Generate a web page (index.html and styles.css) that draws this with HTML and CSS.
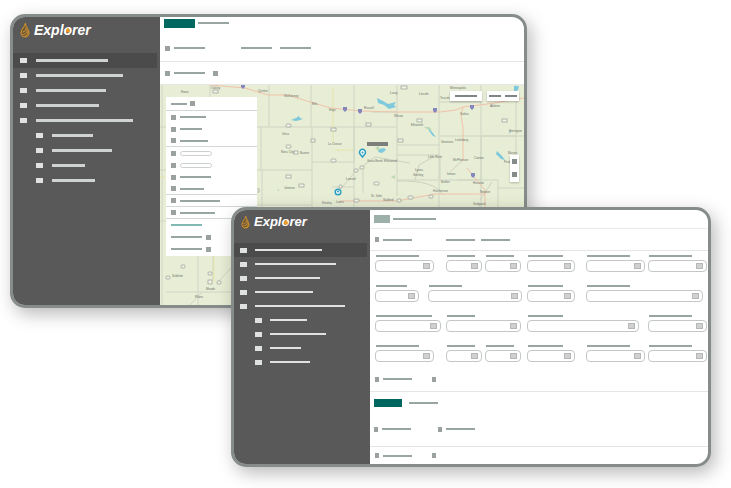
FILE: index.html
```html
<!DOCTYPE html>
<html lang="en">
<head>
<meta charset="utf-8">
<title>Explorer</title>
<link rel="stylesheet" href="styles.css">
</head>
<body>
<svg class="defs" aria-hidden="true">
  <symbol id="flame" viewBox="0 0 20 32">
    <path d="M10 1C11 8 19 13 19 22a9 9 0 0 1-18 0C1 14 9 9 10 1Z" fill="#6b5636"/>
    <path d="M11 2c-1 8-9 12-9 20 0 4 3 8 7 8M11 4c1 7 7 11 7 18 0 4-3 8-8 8M5 20c4 0 8-4 7-9M5 25c6 0 10-4 9-10M9 29c5-1 8-5 7-10" fill="none" stroke="#dc9a30" stroke-width="2"/>
  </symbol>
  <symbol id="drop" viewBox="0 0 10 14">
    <path d="M5 0C6 4 10 6 10 9.500a5 4.500 0 0 1-10 0C0 6 4 4 5 0Z" fill="#f29a24"/>
  </symbol>
</svg>
<main class="desktop">
  <section class="window window-map">
    <aside class="sidebar">
      <a class="brand" href="#"><svg class="flame"><use href="#flame"/></svg><span class="name">Explorer<svg class="drop"><use href="#drop"/></svg></span></a>
      <nav class="menu">
        <a class="active" href="#" aria-label="Item 1"><i class="tile"></i><i class="line w-72"></i></a>
        <a href="#" aria-label="Item 2"><i class="tile"></i><i class="line w-87"></i></a>
        <a href="#" aria-label="Item 3"><i class="tile"></i><i class="line w-70"></i></a>
        <a href="#" aria-label="Item 4"><i class="tile"></i><i class="line w-63"></i></a>
        <a href="#" aria-label="Item 5"><i class="tile"></i><i class="line w-97"></i></a>
        <a class="sub" href="#" aria-label="Item 6"><i class="tile"></i><i class="line w-41"></i></a>
        <a class="sub" href="#" aria-label="Item 7"><i class="tile"></i><i class="line w-60"></i></a>
        <a class="sub" href="#" aria-label="Item 8"><i class="tile"></i><i class="line w-33"></i></a>
        <a class="sub" href="#" aria-label="Item 9"><i class="tile"></i><i class="line w-43"></i></a>
      </nav>
    </aside>
    <div class="content">
      <header class="tabs"><button class="primary" aria-label="Map"></button><i class="bar w-31"></i></header>
      <div class="row filters"><i class="dot"></i><i class="bar w-31"></i><i class="bar w-31 push"></i><i class="bar w-31"></i></div>
      <div class="row options"><i class="dot"></i><i class="bar w-31"></i><i class="dot"></i></div>
      <div class="map">
        <svg class="tiles" viewBox="160 85 364 220" preserveAspectRatio="xMinYMin slice" aria-hidden="true">
          <rect x="160" y="85" width="1200" height="800" fill="#e8edd5"/>
          <g fill="none" stroke="#ced5c3" stroke-width="1">
            <path d="M162 85V305M210 85V97M269 85V127M311 85V127M354 85V127M397 85V196M439 85V180M481 85V209M160 127H397M160 170H166M261 127V170M312 127V209M354 127V170M256 170H312M312 162H354M397 145H440M397 155H440V180H481M440 136H516V85M256 205H312M262 170V209M439 102H481M481 136H524M354 127V162M354 170V209M397 180H439V209M363 170V193M332 187H354M457 180H498V209M498 188H524M160 221H166M198 255V305M166 292H231M213 255V280M218 282L231 268M190 305L201 293M481 180V136M516 136V180"/>
          </g>
          <g fill="none" stroke="#e6e4a8" stroke-width="1"><path d="M333 88V142M335 150H353M214 255V282M160 177H165"/></g>
          <g fill="none" stroke="#ced2bf" stroke-width="1"><path d="M338 192L355 172L375 157L410 163M415 180L419 165L433 157M397 181Q435 180 443 195M450 172L463 160M480 200L492 182M372 112L397 112"/></g>
          <g fill="none" stroke="#efc2a9" stroke-width="1">
            <path d="M210 85L245 88L268 95H288L310 102L331 108L362 111L397 112H440L456 110L463 107L480 105L495 103L524 98M463 107L461 115L463 128V161M467 168L474 177L485 190V209M340 201H397L435 194H485"/>
          </g>
          <g fill="#7ec9dc">
            <path d="M377 98l6 3 5 3 8-2-2 3 2 2-7 2-5-4-6-2z"/><path d="M291 120l5-2 3-2 1 2 3 1-3 1-4 1z"/><path d="M428 127l4 5 4 5-3-1-4-5z"/><path d="M497 151l5 5 3 4-4-1-5-5z"/><path d="M379 149l5-1 2 2-4 3-4-1z"/><path d="M514 86h5l-1 4-4 2z"/><path d="M511 130l-2 2 1 2z"/>
          </g>
          <g fill="#b9d8af"><path d="M424 127l5 0 3 3-5-1z"/><path d="M391 177l4-2v4z"/><path d="M375 148l4-2v5z"/><path d="M277 189l3 1-2 1z"/><path d="M505 97l3 1-2 1z"/></g>
          <g fill="#8587bc"><path d="M343 107h4v3l-2 2-2-2zM358 109h4v3l-2 2-2-2zM433 108h4v3l-2 2-2-2zM470 105h4v3l-2 2-2-2zM471 173h4v3l-2 2-2-2zM241 85h4v2l-2 2-2-2z"/></g>
          <g fill="#f2f4e9" stroke="#989d93" stroke-width=".7">
            <rect x="213" y="90" width="5" height="3"/><rect x="286" y="124" width="5" height="3" rx="1"/><rect x="331" y="128" width="5" height="3"/><rect x="311" y="139" width="4" height="3"/><rect x="286" y="145" width="5" height="3" rx="1"/><rect x="294" y="151" width="4" height="3"/><rect x="331" y="159" width="5" height="3" rx="1"/><rect x="286" y="175" width="5" height="3"/><rect x="299" y="184" width="5" height="3"/><rect x="354" y="169" width="4" height="3" rx="1"/><rect x="360" y="166" width="4" height="3" rx="1"/><rect x="339" y="185" width="3" height="3" rx="1"/><rect x="366" y="123" width="5" height="3"/><rect x="398" y="139" width="5" height="3"/><rect x="417" y="119" width="5" height="3"/><rect x="401" y="86" width="6" height="3"/><rect x="502" y="119" width="5" height="3"/><rect x="374" y="182" width="5" height="3" rx="1"/><rect x="354" y="199" width="5" height="3" rx="1"/><rect x="397" y="199" width="4" height="3" rx="1"/><rect x="408" y="196" width="5" height="3" rx="1"/><rect x="429" y="195" width="4" height="3" rx="1"/><rect x="256" y="189" width="3" height="3"/>
            <rect x="181" y="265" width="4" height="3" rx="1"/><rect x="166" y="276" width="4" height="3" rx="1"/><rect x="208" y="272" width="4" height="3" rx="1"/><rect x="208" y="280" width="4" height="4"/><rect x="217" y="281" width="4" height="3" rx="1"/>
          </g>
          <g class="places">
            <text x="181" y="93">Hoxie</text><text x="211" y="89">Oakley</text><text x="258" y="92">Quinter</text><text x="284" y="97">WaKeeney</text><text x="312" y="105">Ellis</text><text x="329" y="111">Hays</text><text x="364" y="109">Russell</text><text x="394" y="117">Wilson</text><text x="390" y="94">Luray</text><text x="419" y="95">Lincoln</text><text x="450" y="89">Minneapolis</text><text x="440" y="99">Tescott</text><text x="460" y="115">Salina</text><text x="490" y="107">Abilene</text><text x="411" y="126">Ellsworth</text><text x="509" y="132">Herington</text><text x="282" y="135">Utica</text><text x="328" y="145">La Crosse</text><text x="281" y="153">Ness City</text><text x="300" y="154">Bazine</text><text x="367" y="162">Great Bend</text><text x="384" y="162">Ellinwood</text><text x="415" y="171">Lyons</text><text x="428" y="158">Little River</text><text x="441" y="143">Geneseo</text><text x="455" y="141">Lindsborg</text><text x="453" y="161">McPherson</text><text x="474" y="159">Canton</text><text x="508" y="154">Marion</text><text x="504" y="163">Peabody</text><text x="447" y="175">Inman</text><text x="413" y="176">Sterling</text><text x="346" y="180">Larned</text><text x="284" y="189">Jetmore</text><text x="322" y="204">Kinsley</text><text x="336" y="203">Lewis</text><text x="371" y="197">St. John</text><text x="383" y="201">Stafford</text><text x="441" y="183">Buhler</text><text x="433" y="192">Hutchinson</text><text x="473" y="184">Hesston</text><text x="480" y="193">Newton</text><text x="473" y="205">Sedgwick</text><text x="172" y="277">Sublette</text><text x="206" y="290">Meade</text><text x="195" y="298">Plains</text>
          </g>
          <rect x="367" y="142" width="21" height="4" fill="#7b7e7a"/>
          <g fill="#f7fbf5" stroke="#2b9fc4" stroke-width="1.500"><path d="M362.500 157l-2-2.500a3 3 0 1 1 4 0z"/><circle cx="338" cy="192" r="2.800"/></g>
          <g fill="#2b9fc4"><circle cx="362.500" cy="152.500" r="1"/><circle cx="338" cy="191.500" r="1"/></g>
        </svg>
        <div class="layers">
          <div class="entry title"><i class="bar w-16"></i><i class="dot"></i></div>
          <div class="entry"><i class="dot"></i><i class="bar w-26"></i></div>
          <div class="entry"><i class="dot"></i><i class="bar w-22"></i></div>
          <div class="entry ruled"><i class="dot"></i><i class="bar w-28"></i></div>
          <label class="entry"><i class="dot"></i><input class="pill" type="text" aria-label="From"></label>
          <label class="entry"><i class="dot"></i><input class="pill" type="text" aria-label="To"></label>
          <div class="entry"><i class="dot"></i><i class="bar w-31"></i></div>
          <div class="entry ruled"><i class="dot"></i><i class="bar w-24"></i></div>
          <div class="entry ruled"><i class="dot"></i><i class="bar w-40"></i></div>
          <div class="entry ruled"><i class="dot"></i><i class="bar w-35"></i></div>
          <div class="entry"><i class="bar accent w-31"></i></div>
          <div class="entry"><i class="bar w-31"></i><i class="dot"></i></div>
          <div class="entry"><i class="bar w-31"></i><i class="dot"></i></div>
        </div>
        <div class="map-actions">
          <button aria-label="Basemap"><i class="mark w-22"></i></button>
          <button aria-label="Measure and print"><i class="mark w-12"></i><i class="mark w-12"></i></button>
        </div>
        <div class="map-zoom"><button aria-label="Zoom in"></button><button aria-label="Zoom out"></button></div>
      </div>
    </div>
  </section>

  <section class="window window-form">
    <aside class="sidebar">
      <a class="brand" href="#"><svg class="flame"><use href="#flame"/></svg><span class="name">Explorer<svg class="drop"><use href="#drop"/></svg></span></a>
      <nav class="menu">
        <a class="active" href="#" aria-label="Item 1"><i class="tile"></i><i class="line w-67"></i></a>
        <a href="#" aria-label="Item 2"><i class="tile"></i><i class="line w-81"></i></a>
        <a href="#" aria-label="Item 3"><i class="tile"></i><i class="line w-65"></i></a>
        <a href="#" aria-label="Item 4"><i class="tile"></i><i class="line w-58"></i></a>
        <a href="#" aria-label="Item 5"><i class="tile"></i><i class="line w-90"></i></a>
        <a class="sub" href="#" aria-label="Item 6"><i class="tile"></i><i class="line w-37"></i></a>
        <a class="sub" href="#" aria-label="Item 7"><i class="tile"></i><i class="line w-56"></i></a>
        <a class="sub" href="#" aria-label="Item 8"><i class="tile"></i><i class="line w-31"></i></a>
        <a class="sub" href="#" aria-label="Item 9"><i class="tile"></i><i class="line w-40"></i></a>
      </nav>
    </aside>
    <div class="content">
      <header class="tabs"><button class="muted" aria-label="Search"></button><i class="bar w-43"></i></header>
      <div class="row criteria"><i class="dot"></i><i class="bar w-29"></i><i class="bar w-29 push"></i><i class="bar w-29"></i></div>
      <form class="fields">
        <label class="field f-59"><i class="bar w-43"></i><span class="box"><input type="text" aria-label="Field 1"><i class="pick"></i></span></label>
        <label class="field f-36"><i class="bar w-28"></i><span class="box"><input type="text" aria-label="Field 2"><i class="pick"></i></span></label>
        <label class="field f-36"><i class="bar w-28"></i><span class="box"><input type="text" aria-label="Field 3"><i class="pick"></i></span></label>
        <label class="field f-48"><i class="bar w-35"></i><span class="box"><input type="text" aria-label="Field 4"><i class="pick"></i></span></label>
        <label class="field f-59"><i class="bar w-43"></i><span class="box"><input type="text" aria-label="Field 5"><i class="pick"></i></span></label>
        <label class="field f-59"><i class="bar w-43"></i><span class="box"><input type="text" aria-label="Field 6"><i class="pick"></i></span></label>

        <div class="pair">
          <label class="field f-44"><i class="bar w-31"></i><span class="box"><input type="text" aria-label="Field 7"><i class="pick"></i></span></label>
          <label class="field f-94"><i class="bar w-33"></i><span class="box"><input type="text" aria-label="Field 8"><i class="pick"></i></span></label>
        </div>
        <label class="field f-48"><i class="bar w-35"></i><span class="box"><input type="text" aria-label="Field 9"><i class="pick"></i></span></label>
        <label class="field f-117 span-2"><i class="bar w-43"></i><span class="box"><input type="text" aria-label="Field 10"><i class="pick"></i></span></label>

        <label class="field f-66"><i class="bar w-56"></i><span class="box"><input type="text" aria-label="Field 11"><i class="pick"></i></span></label>
        <label class="field f-75 span-2"><i class="bar w-28"></i><span class="box"><input type="text" aria-label="Field 12"><i class="pick"></i></span></label>
        <label class="field f-112 span-2"><i class="bar w-35"></i><span class="box"><input type="text" aria-label="Field 13"><i class="pick"></i></span></label>
        <label class="field f-59"><i class="bar w-43"></i><span class="box"><input type="text" aria-label="Field 14"><i class="pick"></i></span></label>

        <label class="field f-59"><i class="bar w-43"></i><span class="box"><input type="text" aria-label="Field 15"><i class="pick"></i></span></label>
        <label class="field f-36"><i class="bar w-28"></i><span class="box"><input type="text" aria-label="Field 16"><i class="pick"></i></span></label>
        <label class="field f-36"><i class="bar w-28"></i><span class="box"><input type="text" aria-label="Field 17"><i class="pick"></i></span></label>
        <label class="field f-48"><i class="bar w-35"></i><span class="box"><input type="text" aria-label="Field 18"><i class="pick"></i></span></label>
        <label class="field f-59"><i class="bar w-43"></i><span class="box"><input type="text" aria-label="Field 19"><i class="pick"></i></span></label>
        <label class="field f-59"><i class="bar w-43"></i><span class="box"><input type="text" aria-label="Field 20"><i class="pick"></i></span></label>
      </form>
      <div class="row toggles"><i class="dot"></i><i class="bar w-29"></i><i class="dot far"></i></div>
      <div class="actions"><button class="primary" aria-label="Results"></button><i class="bar w-29"></i></div>
      <div class="row summary"><i class="dot"></i><i class="bar w-29"></i><i class="dot farther"></i><i class="bar w-29"></i></div>
      <div class="row last"><i class="dot"></i><i class="bar w-29"></i><i class="dot far"></i></div>
    </div>
  </section>
</main>
</body>
</html>
```
FILE: styles.css
```css
* {
  box-sizing: border-box;
}

body {
  margin: 0;
  background: #fff;
  font-family: "Liberation Sans", Arial, sans-serif;
}

button {
  padding: 0;
  border: 0;
}

input {
  min-width: 0;
  padding: 0;
  border: 0;
  background: none;
  outline: 0;
  font-size: 8px;
}

a {
  color: inherit;
  text-decoration: none;
}

.defs {
  position: absolute;
  width: 0;
  height: 0;
}

/* Overlapping windows */
.desktop {
  position: relative;
  min-height: 100vh;
}

.window {
  position: absolute;
  display: flex;
  overflow: hidden;
  border: 3px solid #858c89;
  border-radius: 15px;
  background: #fff;
  box-shadow: 4px 6px 18px rgba(0, 0, 0, .28);
}

.window-map {
  top: 14px;
  left: 10px;
  right: 204px;
}

.window-form {
  top: 207px;
  left: 231px;
  right: 20px;
}

/* Sidebar */
.sidebar {
  flex: none;
  width: 147px;
  background: #595959;
}

.window-form .sidebar {
  width: 136px;
}

.brand {
  display: flex;
  gap: 4px;
  height: 36px;
  padding: 5px 7px;
  color: #fff;
  font-size: 14px;
  font-weight: bold;
  font-style: italic;
  line-height: 16px;
}

.flame {
  width: 10px;
  height: 16px;
}

.name {
  position: relative;
}

.drop {
  position: absolute;
  top: 5px;
  left: 32px;
  width: 4px;
  height: 6px;
}

.window-form .brand {
  height: 33px;
  font-size: 13px;
  line-height: 14px;
}

.window-form .flame {
  width: 9px;
  height: 14px;
}

.window-form .drop {
  top: 4px;
  left: 30px;
}

.menu a {
  display: flex;
  align-items: center;
  gap: 9px;
  height: 15px;
  margin-right: 3px;
  padding-left: 7px;
}

.window-form .menu a {
  gap: 8px;
  height: 14px;
  padding-left: 6px;
}

.menu .active {
  background: #4b4b4b;
}

.menu a.sub {
  padding-left: 23px;
}

.window-form .menu a.sub {
  padding-left: 21px;
}

.tile {
  width: 7px;
  height: 5px;
  background: #dfe2e1;
}

.line {
  height: 3px;
  background: #cfd3d1;
}

.window-form .line {
  height: 2px;
  background: #dfe2e1;
}

/* Placeholders */
.bar {
  flex: none;
  height: 2px;
  background: #98a5a1;
}

.dot {
  flex: none;
  width: 5px;
  height: 5px;
  background: #9aa19e;
}

.accent {
  background: #7fbab4;
}

.primary {
  width: 31px;
  height: 9px;
  background: #006660;
}

.muted {
  width: 16px;
  height: 8px;
  background: #9eb0aa;
}

/* Content rows */
.content {
  display: flex;
  flex: 1;
  flex-direction: column;
  min-width: 0;
}

.tabs,
.actions {
  display: flex;
  align-items: center;
  gap: 3px;
  height: 12px;
  padding-left: 4px;
}

.row {
  display: flex;
  align-items: center;
  gap: 4px;
  padding-left: 5px;
  border-bottom: 1px solid #e3e6e5;
}

.filters {
  gap: 4px;
  height: 33px;
  padding-top: 6px;
}

.filters .push {
  margin: 0 4px 0 32px;
}

.options {
  height: 23px;
}

.options .dot:last-child {
  margin-left: 4px;
}

/* Map */
.map {
  position: relative;
  flex: 1;
  min-height: 220px;
  padding: 12px 6px;
}

.tiles {
  position: absolute;
  inset: 0;
  width: 100%;
  height: 100%;
}

.places {
  fill: #6d736b;
  font-size: 3px;
}

.layers {
  position: relative;
  width: 91px;
  padding-bottom: 1px;
  background: #fff;
}

.entry {
  display: flex;
  align-items: center;
  gap: 4px;
  height: 12px;
  padding-left: 5px;
}

.entry.title {
  gap: 3px;
  height: 14px;
}

.entry.title,
.entry.ruled {
  border-bottom: 1px solid #d3d8d6;
}

.pill {
  width: 32px;
  height: 5px;
  border: 1px solid #ccd1cf;
  border-radius: 3px;
}

.map-actions {
  position: absolute;
  top: 6px;
  right: 5px;
  display: flex;
  gap: 5px;
}

.map-actions button {
  display: flex;
  align-items: center;
  justify-content: center;
  gap: 4px;
  width: 32px;
  height: 10px;
  background: #fff;
  box-shadow: 0 1px 2px rgba(0, 0, 0, .25);
}

.mark {
  height: 2px;
  background: #7f8582;
}

.map-zoom {
  position: absolute;
  top: 70px;
  right: 5px;
  display: flex;
  flex-direction: column;
  gap: 8px;
  padding: 4px 2px 5px;
  background: #fff;
  box-shadow: 0 1px 2px rgba(0, 0, 0, .25);
}

.map-zoom button {
  width: 5px;
  height: 5px;
  background: #858b88;
}

/* Form window */
.window-form .tabs {
  height: 19px;
  border-bottom: 1px solid #e9ebea;
}

.window-form .dot {
  width: 4px;
}

.criteria {
  height: 22px;
}

.criteria .push {
  margin: 0 2px 0 30px;
}

.fields {
  display: grid;
  grid-template-columns: 71fr 39fr 42fr 59fr 62fr 60fr;
  row-gap: 14px;
  padding: 4px 0 0 5px;
}

.field {
  display: flex;
  flex-direction: column;
  gap: 3px;
}

.pair {
  display: flex;
  grid-column: span 3;
  gap: 9px;
}

.span-2 {
  grid-column: span 2;
}

.field .bar {
  margin-left: 1px;
}

.box {
  display: flex;
  align-items: center;
  height: 12px;
  padding-right: 3px;
  margin-bottom: -1px;
  border: 1px solid #c3c8c6;
  border-radius: 4px;
}

.box input {
  flex: 1;
  width: 0;
  height: 8px;
}

.pick {
  width: 7px;
  height: 6px;
  border: 1px solid #b5b8b6;
  background: #cfd0cf;
}

.toggles {
  height: 31px;
  padding-top: 6px;
}

.far {
  margin-left: 16px;
}

.farther {
  margin-left: 23px;
}

.actions {
  gap: 7px;
  height: 22px;
}

.actions .primary {
  width: 28px;
  height: 8px;
}

.summary {
  height: 33px;
  padding-bottom: 2px;
  padding-left: 4px;
}

.last {
  height: 17px;
  border-bottom: 0;
}

/* Field widths */
.f-36 { width: 36px; }
.f-44 { width: 44px; }
.f-48 { width: 48px; }
.f-59 { width: 59px; }
.f-66 { width: 66px; }
.f-75 { width: 75px; }
.f-94 { width: 94px; }
.f-112 { width: 112px; }
.f-117 { width: 117px; }

/* Placeholder widths */
.w-12 { width: 12px; }
.w-16 { width: 16px; }
.w-22 { width: 22px; }
.w-24 { width: 24px; }
.w-26 { width: 26px; }
.w-28 { width: 28px; }
.w-29 { width: 29px; }
.w-31 { width: 31px; }
.w-33 { width: 33px; }
.w-35 { width: 35px; }
.w-37 { width: 37px; }
.w-40 { width: 40px; }
.w-41 { width: 41px; }
.w-43 { width: 43px; }
.w-56 { width: 56px; }
.w-58 { width: 58px; }
.w-60 { width: 60px; }
.w-63 { width: 63px; }
.w-65 { width: 65px; }
.w-67 { width: 67px; }
.w-70 { width: 70px; }
.w-72 { width: 72px; }
.w-81 { width: 81px; }
.w-87 { width: 87px; }
.w-90 { width: 90px; }
.w-97 { width: 97px; }
```
